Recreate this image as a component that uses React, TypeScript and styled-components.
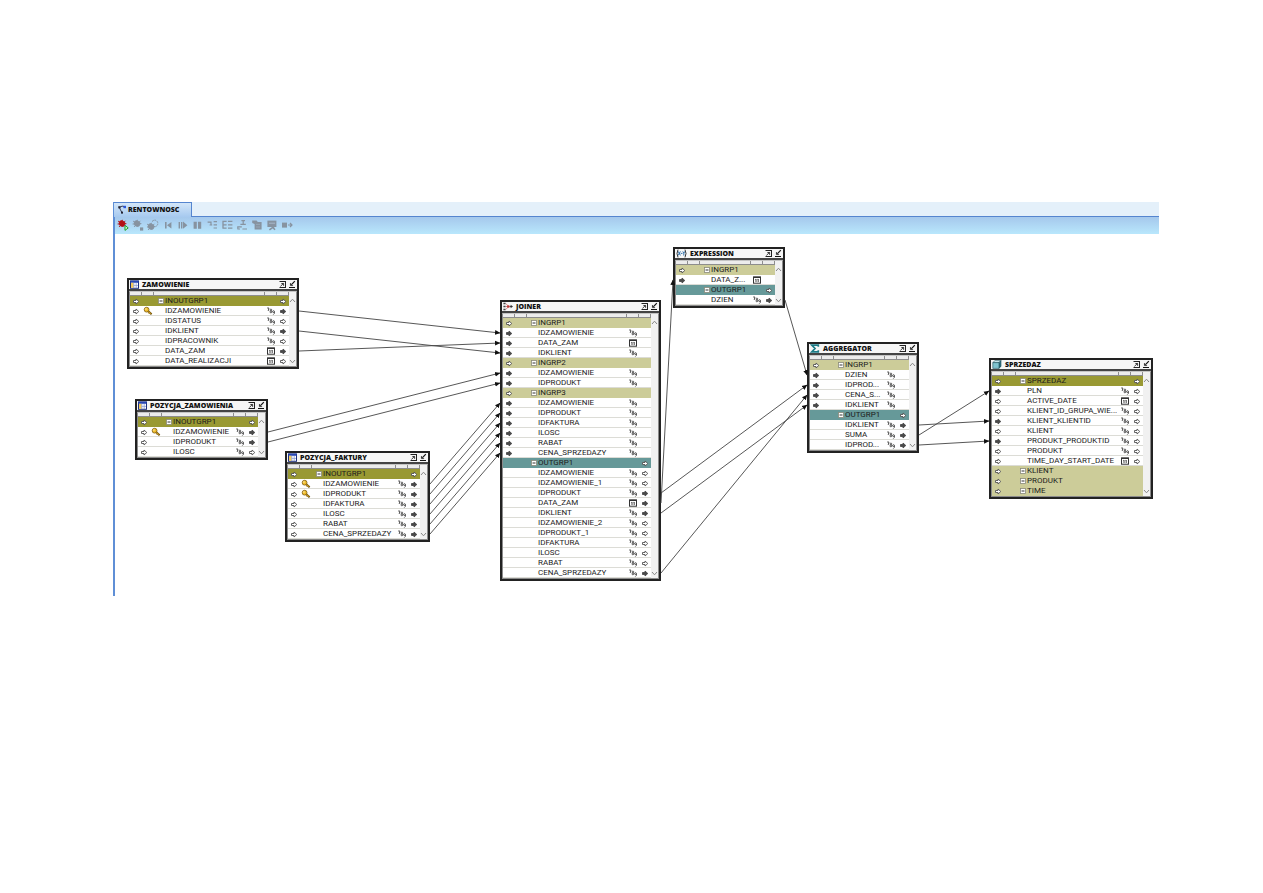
import React from "react";
import styled, { createGlobalStyle, css } from "styled-components";

/* ---------- data ---------- */

type RowKind = "field" | "inout" | "in" | "out";
type Arrow = "hollow" | "solid" | "none";
type DataType = "number" | "date" | "none";
type NodeIcon = "table" | "joiner" | "expression" | "aggregator" | "cube";

interface RowData {
  label: string;
  kind: RowKind;
  left: Arrow;
  right: Arrow;
  type: DataType;
  isKey?: boolean;
}

interface NodeData {
  id: string;
  title: string;
  icon: NodeIcon;
  x: number;
  y: number;
  width: number;
  rows: RowData[];
}

interface EdgeData {
  from: string;
  fromRow: number;
  to: string;
  toRow: number;
}

const arrows: Record<string, Arrow> = { h: "hollow", s: "solid", "-": "none" };
const types: Record<string, DataType> = { n: "number", d: "date", "-": "none" };

const group = (label: string, kind: RowKind, left = "h", right = "-"): RowData => ({
  label,
  kind,
  left: arrows[left],
  right: arrows[right],
  type: "none",
});

const field = (label: string, left: string, type: string, right: string, isKey = false): RowData => ({
  label,
  kind: "field",
  left: arrows[left],
  type: types[type],
  right: arrows[right],
  isKey,
});

const nodes: NodeData[] = [
  {
    id: "zam", title: "ZAMOWIENIE", icon: "table", x: 12, y: 44, width: 172,
    rows: [
      group("INOUTGRP1", "inout", "h", "h"),
      field("IDZAMOWIENIE", "h", "n", "s", true),
      field("IDSTATUS", "h", "n", "h"),
      field("IDKLIENT", "h", "n", "s"),
      field("IDPRACOWNIK", "h", "n", "h"),
      field("DATA_ZAM", "h", "d", "s"),
      field("DATA_REALIZACJI", "h", "d", "h"),
    ],
  },
  {
    id: "pzam", title: "POZYCJA_ZAMOWIENIA", icon: "table", x: 20, y: 165, width: 133,
    rows: [
      group("INOUTGRP1", "inout", "h", "h"),
      field("IDZAMOWIENIE", "h", "n", "s", true),
      field("IDPRODUKT", "h", "n", "s"),
      field("ILOSC", "h", "n", "h"),
    ],
  },
  {
    id: "pfak", title: "POZYCJA_FAKTURY", icon: "table", x: 170, y: 217, width: 145,
    rows: [
      group("INOUTGRP1", "inout", "h", "h"),
      field("IDZAMOWIENIE", "h", "n", "s", true),
      field("IDPRODUKT", "h", "n", "s", true),
      field("IDFAKTURA", "h", "n", "s"),
      field("ILOSC", "h", "n", "s"),
      field("RABAT", "h", "n", "s"),
      field("CENA_SPRZEDAZY", "h", "n", "s"),
    ],
  },
  {
    id: "join", title: "JOINER", icon: "joiner", x: 385, y: 66, width: 161,
    rows: [
      group("INGRP1", "in"),
      field("IDZAMOWIENIE", "s", "n", "-"),
      field("DATA_ZAM", "s", "d", "-"),
      field("IDKLIENT", "s", "n", "-"),
      group("INGRP2", "in"),
      field("IDZAMOWIENIE", "s", "n", "-"),
      field("IDPRODUKT", "s", "n", "-"),
      group("INGRP3", "in"),
      field("IDZAMOWIENIE", "s", "n", "-"),
      field("IDPRODUKT", "s", "n", "-"),
      field("IDFAKTURA", "s", "n", "-"),
      field("ILOSC", "s", "n", "-"),
      field("RABAT", "s", "n", "-"),
      field("CENA_SPRZEDAZY", "s", "n", "-"),
      group("OUTGRP1", "out", "-", "h"),
      field("IDZAMOWIENIE", "-", "n", "h"),
      field("IDZAMOWIENIE_1", "-", "n", "h"),
      field("IDPRODUKT", "-", "n", "s"),
      field("DATA_ZAM", "-", "d", "s"),
      field("IDKLIENT", "-", "n", "s"),
      field("IDZAMOWIENIE_2", "-", "n", "h"),
      field("IDPRODUKT_1", "-", "n", "h"),
      field("IDFAKTURA", "-", "n", "h"),
      field("ILOSC", "-", "n", "h"),
      field("RABAT", "-", "n", "h"),
      field("CENA_SPRZEDAZY", "-", "n", "s"),
    ],
  },
  {
    id: "expr", title: "EXPRESSION", icon: "expression", x: 558, y: 13, width: 112,
    rows: [
      group("INGRP1", "in"),
      field("DATA_Z...", "s", "d", "-"),
      group("OUTGRP1", "out", "-", "h"),
      field("DZIEN", "-", "n", "s"),
    ],
  },
  {
    id: "aggr", title: "AGGREGATOR", icon: "aggregator", x: 692, y: 108, width: 112,
    rows: [
      group("INGRP1", "in"),
      field("DZIEN", "s", "n", "-"),
      field("IDPROD...", "s", "n", "-"),
      field("CENA_S...", "s", "n", "-"),
      field("IDKLIENT", "s", "n", "-"),
      group("OUTGRP1", "out", "-", "h"),
      field("IDKLIENT", "-", "n", "s"),
      field("SUMA", "-", "n", "s"),
      field("IDPROD...", "-", "n", "s"),
    ],
  },
  {
    id: "sprz", title: "SPRZEDAZ", icon: "cube", x: 874, y: 124, width: 164,
    rows: [
      group("SPRZEDAZ", "inout", "h", "h"),
      field("PLN", "s", "n", "h"),
      field("ACTIVE_DATE", "h", "d", "h"),
      field("KLIENT_ID_GRUPA_WIE...", "h", "n", "h"),
      field("KLIENT_KLIENTID", "s", "n", "h"),
      field("KLIENT", "h", "n", "h"),
      field("PRODUKT_PRODUKTID", "s", "n", "h"),
      field("PRODUKT", "h", "n", "h"),
      field("TIME_DAY_START_DATE", "h", "d", "h"),
      group("KLIENT", "in"),
      group("PRODUKT", "in"),
      group("TIME", "in"),
    ],
  },
];

const edges: EdgeData[] = [
  { from: "zam", fromRow: 1, to: "join", toRow: 1 },
  { from: "zam", fromRow: 3, to: "join", toRow: 3 },
  { from: "zam", fromRow: 5, to: "join", toRow: 2 },
  { from: "pzam", fromRow: 1, to: "join", toRow: 5 },
  { from: "pzam", fromRow: 2, to: "join", toRow: 6 },
  { from: "pfak", fromRow: 1, to: "join", toRow: 8 },
  { from: "pfak", fromRow: 2, to: "join", toRow: 9 },
  { from: "pfak", fromRow: 3, to: "join", toRow: 10 },
  { from: "pfak", fromRow: 4, to: "join", toRow: 11 },
  { from: "pfak", fromRow: 5, to: "join", toRow: 12 },
  { from: "pfak", fromRow: 6, to: "join", toRow: 13 },
  { from: "join", fromRow: 18, to: "expr", toRow: 1 },
  { from: "join", fromRow: 17, to: "aggr", toRow: 2 },
  { from: "join", fromRow: 19, to: "aggr", toRow: 4 },
  { from: "join", fromRow: 25, to: "aggr", toRow: 3 },
  { from: "expr", fromRow: 3, to: "aggr", toRow: 1 },
  { from: "aggr", fromRow: 6, to: "sprz", toRow: 4 },
  { from: "aggr", fromRow: 7, to: "sprz", toRow: 1 },
  { from: "aggr", fromRow: 8, to: "sprz", toRow: 6 },
];

const HEAD = 18;
const ROW = 10;

/* ---------- styles ---------- */

const GlobalStyle = createGlobalStyle`
  * { box-sizing: border-box; }
  body { margin: 0; background: #fff; color: #222; font-family: "Open Sans", "Noto Sans", sans-serif; }
  button { font: inherit; color: inherit; padding: 0; border: 0; background: none; }
  svg { display: block; flex: none; }
  ul { list-style: none; margin: 0; padding: 0; }
`;

const Page = styled.main`
  padding: 202px 104px 0 113px;
`;

const Editor = styled.section`
  border-left: 2px solid #5f8fd6;
`;

const TabStrip = styled.div`
  display: flex;
  align-items: stretch;
  height: 15px;
  margin-left: -1px;
  background: #e4f0fa;
  box-shadow: inset 0 -1px #5585cf;
`;

const Tab = styled.button`
  display: flex;
  align-items: center;
  gap: 1px;
  width: 78px;
  padding: 0 0 2px 4px;
  border-top: 1px solid #5585cf;
  border-right: 1px solid #5585cf;
  background: linear-gradient(#d3e6f9, #a6c9ef);
  color: #111;
  font-size: 7px;
  font-weight: 800;
`;

const Toolbar = styled.div`
  display: flex;
  align-items: center;
  gap: 3px;
  height: 17px;
  padding: 0 0 2px 2px;
  background: linear-gradient(#a5c8ec, #b9e7fc);
`;

const ToolButton = styled.button`
  width: 12px;
  height: 12px;
`;

const Canvas = styled.div`
  position: relative;
  min-height: 362px;
`;

const EdgeLayer = styled.svg`
  position: absolute;
  inset: 0;
  width: 100%;
  height: 100%;
  overflow: visible;
  pointer-events: none;
`;

const NodeFrame = styled.article<{ $x: number; $y: number; $width: number }>`
  position: absolute;
  left: ${(p) => p.$x}px;
  top: ${(p) => p.$y}px;
  width: ${(p) => p.$width}px;
  border: 2px solid #222;
  background: #fff;
`;

const TitleBar = styled.header`
  display: flex;
  align-items: center;
  height: 11px;
  padding: 0 0 0 1px;
  border-bottom: 2px solid #444;
  background: #f6f6f6;
`;

const Title = styled.h2`
  flex: 1;
  margin: 0;
  padding-left: 3px;
  color: #111;
  font-size: 7px;
  font-weight: 800;
  line-height: 9px;
  white-space: nowrap;
`;

const WindowButton = styled.button`
  width: 9px;
  height: 9px;
`;

const Body = styled.div`
  display: grid;
  grid-template-columns: 1fr 7px;
  border: 1px solid #8b8b8b;
  border-top-color: #c4c4c4;
`;

const columns = css`
  display: grid;
  grid-template-columns: 12px 12px 1fr 12px 12px;
`;

const ColumnHeads = styled.div`
  ${columns}
  height: 4px;
  background: #ececec;
`;

const ColumnHead = styled.span`
  border-right: 1px solid #8d8d8d;
  border-bottom: 1px solid #8d8d8d;
`;

const rowColors: Record<RowKind, string> = {
  field: "#ffffff",
  inout: "#999933",
  in: "#cccc99",
  out: "#669999",
};

const Row = styled.li<{ $kind: RowKind }>`
  ${columns}
  align-items: center;
  height: 10px;
  background: ${(p) => rowColors[p.$kind]};
  box-shadow: inset 0 -1px ${(p) => (p.$kind === "field" ? "#dcdcd6" : rowColors[p.$kind])};
`;

const Cell = styled.span`
  display: flex;
  justify-content: center;
`;

const Label = styled.span<{ $group: boolean }>`
  display: flex;
  align-items: center;
  gap: 1px;
  padding-left: ${(p) => (p.$group ? 4 : 11)}px;
  color: #1c1c1c;
  font-family: Roboto, "Open Sans", sans-serif;
  font-size: 8px;
  line-height: 10px;
  white-space: nowrap;
`;

const Toggle = styled.button`
  width: 6px;
  height: 6px;
`;

const Scroll = styled.div`
  display: flex;
  flex-direction: column;
  align-items: center;
  justify-content: space-between;
  padding: 6px 0 2px;
  background: #f1f1f1;
`;

const ScrollButton = styled.button`
  width: 7px;
  height: 5px;
`;

/* ---------- icons ---------- */

const PortArrow = ({ kind }: { kind: Arrow }) =>
  kind === "none" ? null : (
    <svg width="8" height="8" viewBox="0 0 8 8">
      <path
        d="M1.5 3.5H4V2L6.8 4.5L4 7V5.5H1.5Z"
        fill={kind === "solid" ? "#4a4a4a" : "#fff"}
        stroke={kind === "solid" ? "#4a4a4a" : "#555"}
        strokeWidth=".9"
      />
    </svg>
  );

const KeyIcon = () => (
  <svg width="10" height="10" viewBox="0 0 10 10">
    <path d="M4.4 4.6L8.6 8.2" stroke="#6d4f08" strokeWidth="2" fill="none" />
    <path d="M4.4 4.6L8.2 7.8M6.2 6.4L5.4 7.6" stroke="#d9a520" strokeWidth=".9" fill="none" />
    <circle cx="3.6" cy="3.7" r="2.4" fill="#f1bd2c" stroke="#7c5a0c" strokeWidth=".8" />
    <circle cx="2.9" cy="3" r=".8" fill="#fff3b5" />
  </svg>
);

const NumberIcon = () => (
  <svg width="8" height="8" viewBox="0 0 8 8" fill="none" stroke="#444" strokeWidth=".9">
    <path d="M.2 1H1.9L1.2 4" />
    <circle cx="3.9" cy="2.9" r=".8" />
    <circle cx="3.9" cy="4.9" r=".9" />
    <circle cx="6.5" cy="4.6" r=".9" />
    <path d="M7.4 4.6V6.4L6.3 7.6" />
  </svg>
);

const DateIcon = () => (
  <svg width="8" height="8" viewBox="0 0 8 8" fill="none" stroke="#333">
    <rect x=".5" y=".9" width="7" height="6.3" fill="#fff" />
    <path d="M.5 1.4H7.5" strokeWidth="1.2" />
    <path d="M3 3V6M5.2 3V6" strokeWidth=".9" />
    <path d="M2.2 3.4H3M4.4 3.4H5.2" strokeWidth=".6" />
  </svg>
);

const MinusBox = () => (
  <svg width="6" height="6" viewBox="0 0 6 6">
    <rect x=".5" y=".5" width="5" height="5" fill="#fff" stroke="#8a8a7a" strokeWidth=".8" />
    <path d="M1.5 3H4.5" stroke="#333" />
  </svg>
);

const Chevron = ({ up }: { up?: boolean }) => (
  <svg width="7" height="5" viewBox="0 0 7 5">
    <path d={up ? "M1 4L3.5 1.2L6 4" : "M1 1L3.5 3.8L6 1"} fill="none" stroke="#888" />
  </svg>
);

const MaximizeIcon = () => (
  <svg width="8" height="9" viewBox="0 0 8 9" fill="none" stroke="#222">
    <path d="M.5 1.5H7M6.5 1.5V8M.5 7.5H7" />
    <path d="M1.4 6.4L4.4 3.5M2.4 3.5H4.6V5.8" strokeWidth=".9" />
  </svg>
);

const MinimizeIcon = () => (
  <svg width="8" height="9" viewBox="0 0 8 9" fill="none" stroke="#111">
    <path d="M1 7.5H7" strokeWidth="1" />
    <path d="M6.8 1.2L4 4.2" strokeWidth="1.2" />
    <path d="M2.4 3.2V5.6H4.8Z" fill="#111" strokeWidth=".5" />
  </svg>
);

const TitleIcon = ({ icon }: { icon: NodeIcon }) => {
  switch (icon) {
    case "table":
      return (
        <svg width="9" height="9" viewBox="0 0 9 9">
          <rect x=".5" y=".9" width="8" height="7.4" fill="#fff" stroke="#1d2f7c" />
          <path d="M.5 1.8H8.5" stroke="#2747b5" strokeWidth="2" />
          <rect x="1" y="2.8" width="2.6" height="5" fill="#f3c95a" />
          <path d="M3.8 3V8M6.2 3V8M3.8 5.4H8" stroke="#7f92d0" strokeWidth=".7" />
        </svg>
      );
    case "joiner":
      return (
        <svg width="10" height="9" viewBox="0 0 10 9" fill="none">
          <path d="M.4 1.5H2.6M.4 4.5H2.6M.4 7.5H2.6" stroke="#444" strokeWidth="1.6" />
          <path d="M3 1.6L5 4M3 4.5H5M3 7.4L5 5" stroke="#c66" strokeWidth=".8" />
          <circle cx="5.4" cy="4.5" r="1.3" fill="#b33" />
          <path d="M6.8 4.5H9" stroke="#333" strokeWidth=".9" />
          <path d="M7.6 2.8L10 4.5L7.6 6.2Z" fill="#333" />
        </svg>
      );
    case "expression":
      return (
        <svg width="11" height="9" viewBox="0 0 11 9" fill="none" stroke="#2f6fa8">
          <path d="M2 .6Q0 4.5 2 8.4M9 .6Q11 4.5 9 8.4" stroke="#333" strokeWidth="1" />
          <path d="M2.2 2.4L4.4 6.4M4.4 2.4L2.2 6.4M4.8 4.4H6.4M6.8 2.4L7.8 4.3L8.8 2.4M7.8 4.3V6.6" strokeWidth="1" />
        </svg>
      );
    case "aggregator":
      return (
        <svg width="10" height="9" viewBox="0 0 10 9">
          <path d="M8.3 2.8V1.2H1.8L5 4.5L1.8 7.8H8.3V6.2" fill="none" stroke="#1c7b86" strokeWidth="1.7" />
        </svg>
      );
    case "cube":
      return (
        <svg width="10" height="9" viewBox="0 0 10 9" stroke="#20525c" strokeWidth=".6">
          <path d="M.8 2.6L3 .6H9L7 2.6Z" fill="#d2eff3" />
          <path d="M7 2.6L9 .6V6.2L7 8.4Z" fill="#2f7382" />
          <path d="M.8 2.6H7V8.4H.8Z" fill="#7fc3cf" />
        </svg>
      );
  }
};

const Bug = ({ color }: { color: string }) => (
  <g fill={color} stroke={color} strokeWidth=".9">
    <ellipse cx="5" cy="4.6" rx="3" ry="2.5" transform="rotate(30 5 4.6)" />
    <path d="M1 2L3 3.4M.6 5H2.6M2 8L3.8 6M5.4 .8L5.2 2.6M8.4 1.8L6.8 3.4M9.4 4.6H7.4" fill="none" />
  </g>
);

const gray = "#8793a0";

const tools: { name: string; drawing: React.ReactNode }[] = [
  { name: "Debug", drawing: <><Bug color="#b31217" /><path d="M8 6.4L11.2 8.9L8 11.4Z" fill="#d9ffd2" stroke="#17a32b" /></> },
  { name: "Stop debugging", drawing: <><Bug color={gray} /><rect x="8" y="8.4" width="3.2" height="3.2" fill={gray} /></> },
  { name: "Reload debugger", drawing: <><g transform="translate(-1 3)"><Bug color={gray} /></g><path d="M5 2.6Q8 -.6 10.6 3Q11.4 6.4 8.6 7.6" fill="none" stroke={gray} strokeDasharray="2 .7" /></> },
  { name: "Restart", drawing: <path d="M3 3V9.4H4.6V3ZM9.4 3V9.4L5 6.2Z" fill={gray} /> },
  { name: "Resume", drawing: <path d="M1.6 3H3V9.4H1.6ZM4 3H5.4V9.4H4ZM6 2.6L10.4 6.2L6 9.8Z" fill={gray} /> },
  { name: "Pause", drawing: <path d="M1.6 2.8H4.8V9.8H1.6ZM6 2.8H9.2V9.8H6Z" fill={gray} /> },
  { name: "Step", drawing: <path d="M.6 3.2H4V6M2.6 6H5.2M6.6 2.6H10M6.6 5.8H10M6.6 9H10" fill="none" stroke={gray} strokeWidth="1.2" /> },
  { name: "Step all", drawing: <path d="M.4 2.4H4.6M.4 5.8H4.6M.4 9.2H4.6M1 2.4V9.2M6 2.4H10.4M6 5.8H10.4M6 9.2H10.4" fill="none" stroke={gray} strokeWidth="1.3" /> },
  { name: "Step back", drawing: <path d="M4.4 1.6H8M6.2 2V5.4M3.4 5.4H8.8M.8 9.8V7.8H4.8M.4 10H3M5.4 10H10" fill="none" stroke={gray} strokeWidth="1.2" /> },
  { name: "Set breakpoint", drawing: <><path d="M.2 1.4H4.6L5.8 3H9.6V10.6H2.6V5L.2 4Z" fill={gray} /><path d="M4 5.4H8M4 8H8" stroke="#a9bccd" strokeWidth=".5" /></> },
  { name: "Watch points", drawing: <><path d="M.4 1.6H9.4V8H.4Z" fill={gray} /><path d="M2 4.2H8" stroke="#b4c9dc" strokeWidth=".7" /><path d="M2.4 10.8L8 6.8M4.6 7L8 10.8" stroke={gray} strokeWidth="1.6" /></> },
  { name: "Send output", drawing: <><rect x="0" y="3.6" width="5" height="5" fill={gray} /><path d="M6 6H9.8M8 4L10 6L8 8" fill="none" stroke={gray} strokeWidth="1.2" /></> },
];

const MappingIcon = () => (
  <svg width="9" height="9" viewBox="0 0 9 9" fill="none">
    <path d="M1.2 2.4L3.8 7.4L4.6 7.6M1.8 2.2Q4 .4 6.6 1.6" stroke="#3a3f55" />
    <rect x=".3" y="1.2" width="2.2" height="2.2" fill="#223" />
    <rect x="3" y="6.6" width="2" height="2" fill="#223" />
    <rect x="5.4" y=".8" width="2.6" height="2.4" fill="#2b56d8" />
  </svg>
);

/* ---------- diagram ---------- */

const MapNode = ({ node }: { node: NodeData }) => (
  <NodeFrame $x={node.x} $y={node.y} $width={node.width}>
    <TitleBar>
      <TitleIcon icon={node.icon} />
      <Title>{node.title}</Title>
      <WindowButton type="button" aria-label={`Maximize ${node.title}`}>
        <MaximizeIcon />
      </WindowButton>
      <WindowButton type="button" aria-label={`Minimize ${node.title}`}>
        <MinimizeIcon />
      </WindowButton>
    </TitleBar>
    <Body>
      <div>
        <ColumnHeads>
          <ColumnHead />
          <ColumnHead />
          <ColumnHead />
          <ColumnHead />
          <ColumnHead />
        </ColumnHeads>
        <ul>
          {node.rows.map((row, index) => (
            <Row key={index} $kind={row.kind}>
              <Cell>
                <PortArrow kind={row.left} />
              </Cell>
              <Cell>{row.isKey && <KeyIcon />}</Cell>
              <Label $group={row.kind !== "field"}>
                {row.kind !== "field" && (
                  <Toggle type="button" aria-label={`Collapse ${row.label}`}>
                    <MinusBox />
                  </Toggle>
                )}
                {row.label}
              </Label>
              <Cell>
                {row.type === "number" && <NumberIcon />}
                {row.type === "date" && <DateIcon />}
              </Cell>
              <Cell>
                <PortArrow kind={row.right} />
              </Cell>
            </Row>
          ))}
        </ul>
      </div>
      <Scroll>
        <ScrollButton type="button" aria-label="Scroll up">
          <Chevron up />
        </ScrollButton>
        <ScrollButton type="button" aria-label="Scroll down">
          <Chevron />
        </ScrollButton>
      </Scroll>
    </Body>
  </NodeFrame>
);

const findNode = (id: string) => nodes.find((n) => n.id === id) as NodeData;
const portY = (node: NodeData, row: number) => node.y + HEAD + row * ROW + ROW / 2;

const Edges = () => (
  <EdgeLayer aria-hidden="true">
    <defs>
      <marker id="arrow-head" markerUnits="userSpaceOnUse" markerWidth="6" markerHeight="6" refX="5" refY="3" orient="auto">
        <path d="M0 .6L5.4 3L0 5.4Z" fill="#111" />
      </marker>
    </defs>
    {edges.map((edge, index) => {
      const from = findNode(edge.from);
      const to = findNode(edge.to);
      return (
        <line
          key={index}
          x1={from.x + from.width}
          y1={portY(from, edge.fromRow)}
          x2={to.x}
          y2={portY(to, edge.toRow)}
          stroke="#444"
          strokeWidth=".9"
          markerEnd="url(#arrow-head)"
        />
      );
    })}
  </EdgeLayer>
);

export default function App() {
  return (
    <>
      <GlobalStyle />
      <Page>
        <Editor aria-label="RENTOWNOSC">
          <TabStrip role="tablist">
            <Tab type="button" role="tab" aria-selected="true">
              <MappingIcon />
              RENTOWNOSC
            </Tab>
          </TabStrip>
          <Toolbar role="toolbar">
            {tools.map((tool) => (
              <ToolButton key={tool.name} type="button" aria-label={tool.name}>
                <svg width="12" height="12" viewBox="0 0 12 12">
                  {tool.drawing}
                </svg>
              </ToolButton>
            ))}
          </Toolbar>
          <Canvas>
            {nodes.map((node) => (
              <MapNode key={node.id} node={node} />
            ))}
            <Edges />
          </Canvas>
        </Editor>
      </Page>
    </>
  );
}
